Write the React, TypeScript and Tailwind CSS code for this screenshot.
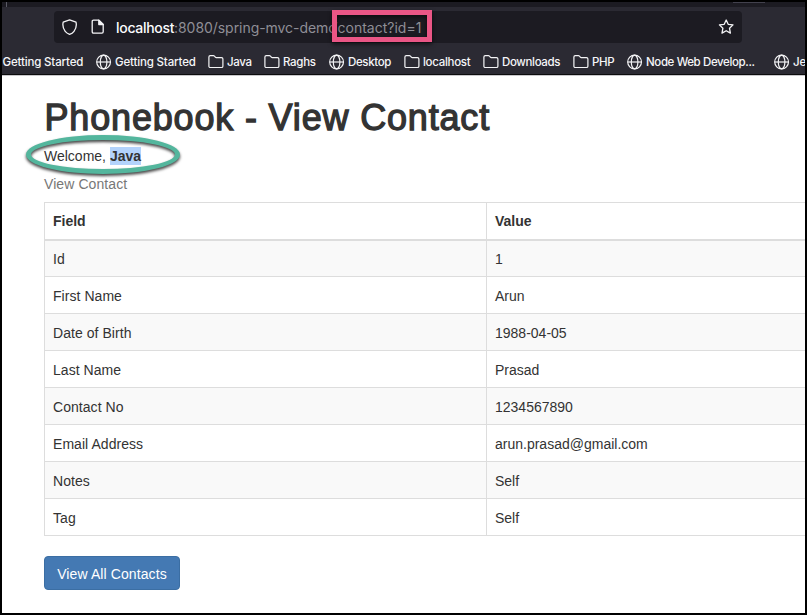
import React from "react";

type BookmarkKind = "globe" | "folder";

const bookmarks: { kind: BookmarkKind; label: string; width: string; spacing: string }[] = [
  { kind: "globe", label: "Getting Started", width: "w-[112px]", spacing: "tracking-[-0.16px]" },
  { kind: "folder", label: "Java", width: "w-[56px]", spacing: "tracking-[-0.3px]" },
  { kind: "folder", label: "Raghs", width: "w-[65px]", spacing: "tracking-[-0.3px]" },
  { kind: "globe", label: "Desktop", width: "w-[75px]", spacing: "tracking-[-0.35px]" },
  { kind: "folder", label: "localhost", width: "w-[79px]", spacing: "tracking-[-0.3px]" },
  { kind: "folder", label: "Downloads", width: "w-[90px]", spacing: "tracking-[-0.35px]" },
  { kind: "folder", label: "PHP", width: "w-[54px]", spacing: "tracking-[-0.3px]" },
  { kind: "globe", label: "Node Web Develop...", width: "w-[147px]", spacing: "tracking-[-0.38px]" },
  { kind: "globe", label: "Je", width: "w-[40px]", spacing: "tracking-[-0.1px]" },
];

const rows = [
  ["Id", "1"],
  ["First Name", "Arun"],
  ["Date of Birth", "1988-04-05"],
  ["Last Name", "Prasad"],
  ["Contact No", "1234567890"],
  ["Email Address", "arun.prasad@gmail.com"],
  ["Notes", "Self"],
  ["Tag", "Self"],
];

function Globe() {
  return (
    <svg className="-mt-[2px] h-4 w-4 shrink-0" viewBox="0 0 16 16" fill="none" stroke="#f4f4f6" strokeWidth="1.2">
      <circle cx="7.6" cy="8" r="6.9" />
      <ellipse cx="7.6" cy="8" rx="3.3" ry="6.9" />
      <path d="M.7 8h13.8" />
    </svg>
  );
}

function Folder() {
  return (
    <svg className="-mt-[2px] h-4 w-4 shrink-0" viewBox="0 0 16 16" fill="none" stroke="#f4f4f6" strokeWidth="1.2" strokeLinejoin="round">
      <path d="M.9 12.2V3c0-.9.5-1.4 1.4-1.4h3.1c.5 0 .8.1 1.1.5l1 1.2c.2.2.4.3.7.3h5.3c.9 0 1.4.5 1.4 1.4v7.2c0 .9-.5 1.3-1.4 1.3H2.3C1.4 13.5.9 13 .9 12.2Z" />
    </svg>
  );
}

function AddressBar() {
  return (
    <div className="mt-[4px] ml-[52px] flex h-8 w-[688px] items-center rounded-[4px] bg-[#1c1b22] pl-2">
      <svg className="h-4 w-4 shrink-0" viewBox="0 0 16 16" fill="none" stroke="#f4f4f6" strokeWidth="1.3" strokeLinejoin="round">
        <path d="M7.6.8 14 3.1c.7 3.1.1 6.6-2 9.3-1.2 1.5-2.7 2.4-4.4 3-1.7-.6-3.2-1.5-4.4-3C1.1 9.7.5 6.2 1.2 3.1Z" />
      </svg>
      <svg className="ml-3 h-4 w-4 shrink-0" viewBox="0 0 16 16" fill="none" stroke="#f4f4f6" strokeWidth="1.3" strokeLinejoin="round">
        <path d="M3.5 1.1h5.3L13.2 5.5v7.3c0 .8-.5 1.3-1.3 1.3H3.5c-.8 0-1.3-.5-1.3-1.3V2.4c0-.8.5-1.3 1.3-1.3Z" />
        <path d="M8.8 1.1v4.4h4.4Z" fill="#f4f4f6" />
      </svg>
      <div className="mt-px ml-[10px] flex whitespace-pre font-['Inter','Liberation_Sans',sans-serif] text-[14px] leading-5 text-[#8f8e96]">
        <span className="w-[58px] font-medium tracking-[-0.3px] text-[#fbfbfe]">localhost</span>
        <span className="w-[158.5px] tracking-[-0.05px]">:8080/spring-mvc-demo</span>
        <span>/contact?id=1</span>
      </div>
      <svg className="mr-2 ml-auto h-4 w-4 shrink-0" viewBox="0 0 16 16" fill="none" stroke="#f4f4f6" strokeWidth="1.3" strokeLinejoin="round">
        <path d="m8.2 1 2 4.3 4.8.6-3.5 3.3.9 4.9-4.2-2.4L4 14.1l.9-4.9-3.5-3.3 4.8-.6Z" />
      </svg>
    </div>
  );
}

function BookmarksBar() {
  return (
    <div className="mt-[10px] flex h-[20px] items-center overflow-hidden font-['Inter','Liberation_Sans',sans-serif] text-[11.5px] leading-5 font-medium whitespace-nowrap text-[#f6f6f8]">
      <span className="-mt-[2px] w-[94px] shrink-0 pl-[0.5px] tracking-[-0.16px]">Getting Started</span>
      {bookmarks.map((b, i) => (
        <div key={i} className={`flex shrink-0 items-center gap-[3px] ${b.width} ${b.spacing}`}>
          {b.kind === "globe" ? <Globe /> : <Folder />}
          <span className="-mt-[2px]">{b.label}</span>
        </div>
      ))}
    </div>
  );
}

export default function App() {
  return (
    <div className="relative h-[615px] w-[807px] overflow-hidden border-2 border-black bg-white font-['Liberation_Sans',Arial,sans-serif] text-[14px] leading-5 text-[#333]">
      <header className="h-[74px] overflow-hidden border-b border-[#c9c8cc] bg-[#2b2a33]">
        <div className="h-[73px] border-b border-[#0c0c0d]">
          <div className="flex h-[5px] bg-[#1c1b22]">
            <div className="ml-1 w-px bg-[#5b5b66]" />
            <div className="ml-[726px] h-[1px] w-[32px] bg-[#42414d]" />
          </div>
          <AddressBar />
          <BookmarksBar />
        </div>
      </header>
      <main className="pl-[42px]">
        <h1 className="h-[61px] pt-[22px] pl-[0.5px] text-[36px] leading-10 tracking-[0.83px] whitespace-nowrap [-webkit-text-stroke:1.3px_#333]">
          Phonebook - View Contact
        </h1>
        <p className="mt-[9px] h-5">
          Welcome, <b className="bg-[#b3d3fc] py-px">Java</b>
        </p>
        <p className="mt-[8px] h-5 tracking-[0.08px] text-[#777]">View Contact</p>
        <div className="mt-[8px] w-[780px] border-l border-[#ddd]">
          <div className="flex h-[39px] border-y border-b-2 border-[#ddd] font-bold">
            <div className="w-[442px] border-r border-[#ddd] py-[8px] pl-2">Field</div>
            <div className="py-[8px] pl-2">Value</div>
          </div>
          {rows.map(([field, value], i) => (
            <div key={field} className={`flex border-b border-[#ddd] ${i === 0 ? "h-[36px]" : "h-[37px] pt-px"} ${i % 2 === 0 ? "bg-[#f9f9f9]" : "bg-white"}`}>
              <div className="-mt-px w-[442px] border-r border-[#ddd] pt-[9px] pl-2 tracking-[0.05px]">{field}</div>
              <div className="pt-[8px] pl-2">{value}</div>
            </div>
          ))}
        </div>
        <button className="mt-5 flex h-[34px] w-[136px] items-center justify-center rounded-[4px] border border-[#3b6ea3] bg-[#4479b3] pt-[2px] tracking-[0.1px] text-white">
          View All Contacts
        </button>
      </main>
      <div className="absolute top-[8px] left-[330px] h-[32px] w-[100px] border-5 border-[#ea5686] drop-shadow-[0_2px_2px_rgba(0,0,0,0.6)]" />
      <div className="absolute top-[133px] left-[24px] h-[39px] w-[154px] rounded-[50%] border-5 border-[#53b69d] drop-shadow-[0_2px_1.5px_rgba(0,0,0,0.75)]" />
    </div>
  );
}
